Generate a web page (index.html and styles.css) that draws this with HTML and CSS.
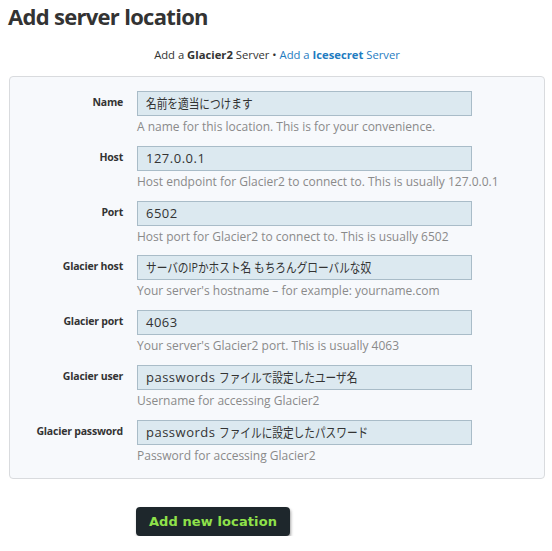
FILE: index.html
```html
<!DOCTYPE html>
<html lang="ja">
<head>
<meta charset="utf-8">
<title>Add server location</title>
<link rel="stylesheet" href="styles.css">
</head>
<body>
<h1 class="title">Add server location</h1>
<p class="switch">Add a <b>Glacier2</b> Server • <a class="switch-link" href="#">Add a <b>Icesecret</b> Server</a></p>
<form class="panel">
  <div class="row">
    <label class="label">Name</label>
    <div class="field">
      <div class="input"><span class="ja">名前を適当につけます</span></div>
      <div class="help">A name for this location. This is for your convenience.</div>
    </div>
  </div>
  <div class="row">
    <label class="label">Host</label>
    <div class="field">
      <div class="input">127.0.0.1</div>
      <div class="help">Host endpoint for Glacier2 to connect to. This is usually 127.0.0.1</div>
    </div>
  </div>
  <div class="row">
    <label class="label">Port</label>
    <div class="field">
      <div class="input">6502</div>
      <div class="help">Host port for Glacier2 to connect to. This is usually 6502</div>
    </div>
  </div>
  <div class="row">
    <label class="label">Glacier host</label>
    <div class="field">
      <div class="input"><span class="ja">サーバのIPかホスト名 もちろんグローバルな奴</span></div>
      <div class="help">Your server's hostname – for example: yourname.com</div>
    </div>
  </div>
  <div class="row">
    <label class="label">Glacier port</label>
    <div class="field">
      <div class="input">4063</div>
      <div class="help">Your server's Glacier2 port. This is usually 4063</div>
    </div>
  </div>
  <div class="row">
    <label class="label">Glacier user</label>
    <div class="field">
      <div class="input">passwords <span class="ja">ファイルで設定したユーザ名</span></div>
      <div class="help">Username for accessing Glacier2</div>
    </div>
  </div>
  <div class="row">
    <label class="label">Glacier password</label>
    <div class="field">
      <div class="input">passwords <span class="ja">ファイルに設定したパスワード</span></div>
      <div class="help">Password for accessing Glacier2</div>
    </div>
  </div>
</form>
<div class="actions">
  <button class="submit" type="button">Add new location</button>
</div>
</body>
</html>
```

FILE: styles.css
```css
html, body {
  margin: 0;
  padding: 0;
  background: #ffffff;
}
body {
  font-family: "Open Sans", "Noto Sans CJK JP", sans-serif;
  color: #333;
  padding: 0 7px 0 9px;
}
.title {
  margin: 0;
  padding-top: 2px;
  margin-left: -1px;
  font-size: 22px;
  line-height: 28px;
  font-weight: 700;
  color: #333;
  letter-spacing: -0.7px;
}
.switch {
  margin: 17px 0 0;
  text-align: center;
  font-size: 11.25px;
  line-height: 16px;
  color: #333;
}
.switch b { font-weight: 700; }
.switch-link {
  color: #1f7cc1;
  text-decoration: none;
}
.panel {
  margin-top: 13px;
  background: #f7f9fc;
  border: 1px solid #d9dbde;
  border-radius: 4px;
  padding: 14px 0 14px;
  width: 536px;
  box-sizing: border-box;
}
.row {
  display: grid;
  grid-template-columns: 113px 335px;
  column-gap: 14px;
  margin-bottom: 10.83px;
}
.row:last-child { margin-bottom: 0; }
.label {
  text-align: right;
  font-size: 10.5px;
  font-weight: 700;
  line-height: 14px;
  padding-top: 4px;
  color: #333;
  letter-spacing: -0.2px;
}
.input {
  height: 25px;
  box-sizing: border-box;
  border: 1px solid #a9bcc8;
  background: #dce9f0;
  padding: 0 8px;
  font-size: 13px;
  line-height: 23px;
  color: #333;
  white-space: nowrap;
  overflow: hidden;
  letter-spacing: 0.5px;
}
.ja {
  display: inline-block;
  font-size: 13px;
  letter-spacing: 0;
  transform: scaleX(0.82);
  transform-origin: left center;
}
.help {
  margin-top: 2px;
  font-size: 12px;
  line-height: 17px;
  color: #8a8a8a;
  white-space: nowrap;
}
.actions {
  padding: 28px 0 0 127px;
}
.submit {
  width: 154px;
  height: 29px;
  border: 0;
  border-radius: 4px;
  background: #1e272c;
  color: #8fe24a;
  font-family: "DejaVu Sans", sans-serif;
  font-weight: 700;
  font-size: 13px;
  padding: 0;
  box-shadow: 1px 2px 3px rgba(0,0,0,0.35);
  letter-spacing: 0.1px;
}
```
